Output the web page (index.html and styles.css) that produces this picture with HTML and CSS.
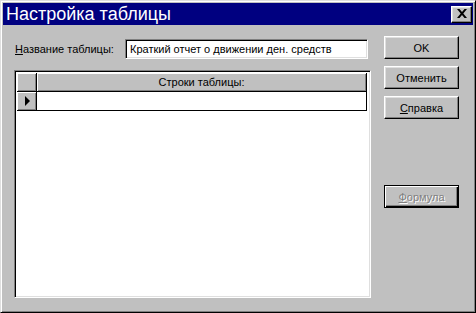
FILE: index.html
```html
<!DOCTYPE html>
<html lang="ru">
    <head>
        <meta charset="UTF-8" />
        <meta name="viewport" content="width=device-width, initial-scale=1.0" />
        <title>Настройка таблицы</title>
        <link rel="stylesheet" href="styles.css">
    </head>
    <body>
        <div class="window">
            <div class="titlebar">
                <span class="title">Настройка таблицы</span>
                <button class="close" type="button">
                    <svg width="10" height="9" viewBox="0 0 10 9">
                        <path d="M0 0h2.5L5 3 7.5 0H10L6.3 4.5 10 9H7.5L5 6 2.5 9H0l3.7-4.5z" fill="#000" />
                    </svg>
                </button>
            </div>
            <div class="content">
                <main class="main">
                    <div class="name-row">
                        <label for="tableName"><u>Н</u>азвание таблицы:</label>
                        <div class="field" id="tableName">Краткий отчет о движении ден. средств</div>
                    </div>
                    <div class="grid">
                        <div class="grid-head">
                            <div class="corner"></div>
                            <div class="col-head">Строки таблицы:</div>
                        </div>
                        <div class="grid-row">
                            <div class="row-mark">
                                <svg width="5" height="10" viewBox="0 0 5 10">
                                    <path d="M0 0l5 5-5 5z" fill="#000" />
                                </svg>
                            </div>
                            <div class="cell"></div>
                        </div>
                    </div>
                </main>
                <div class="buttons">
                    <button class="btn" type="button">OK</button>
                    <button class="btn" type="button">Отменить</button>
                    <button class="btn" type="button"><u>С</u>правка</button>
                    <button class="btn default disabled" type="button" disabled><u>Ф</u>ормула</button>
                </div>
            </div>
        </div>
    </body>
</html>
```

FILE: styles.css
```css
* {
    padding: 0;
    margin: 0;
    box-sizing: border-box;
}
body {
    font-family: "Liberation Sans", Arial, sans-serif;
    font-size: 11px;
    color: #000;
    background: #c0c0c0;
}
.window {
    width: 476px;
    height: 313px;
    background: #c0c0c0;
    border: 1px solid;
    border-color: #dfdfdf #000 #000 #dfdfdf;
    box-shadow: inset 1px 1px #fff, inset -1px -1px #808080;
    padding: 2px;
    display: flex;
    flex-direction: column;
}

/* заголовок окна */
.titlebar {
    height: 22px;
    background: #000080;
    display: flex;
    align-items: center;
    justify-content: space-between;
    padding: 0 1px 0 3px;
}
.title {
    color: #fff;
    font-size: 18px;
    line-height: 22px;
}
.close {
    width: 21px;
    height: 17px;
    background: #c0c0c0;
    border: 1px solid;
    border-color: #fff #000 #000 #fff;
    box-shadow: inset -1px -1px #808080, inset 1px 1px #dfdfdf;
    display: flex;
    align-items: center;
    justify-content: center;
    padding-bottom: 1px;
}

.content {
    flex: 1;
    display: flex;
}
.main {
    width: 357px;
    margin-left: 11px;
}
.name-row {
    display: flex;
    align-items: center;
    height: 20px;
    margin-top: 14px;
}
.name-row label {
    width: 111px;
    padding-left: 1px;
}
.field,
.grid {
    background: #fff;
    border: 1px solid;
    border-color: #808080 #fff #fff #808080;
    box-shadow: inset 1px 1px #000, inset -1px -1px #dfdfdf;
}
.field {
    width: 243px;
    height: 20px;
    line-height: 18px;
    padding-left: 4px;
    white-space: nowrap;
}

/* таблица строк */
.grid {
    margin-top: 11px;
    height: 228px;
    padding: 2px 3px 2px 2px;
}
.grid-head,
.grid-row {
    display: flex;
    height: 19px;
    border-bottom: 1px solid #000;
    border-right: 1px solid #000;
}
.corner,
.col-head,
.row-mark {
    background: #c0c0c0;
    box-shadow: inset 1px 1px #fff, inset -1px -1px #808080;
}
.corner,
.row-mark {
    width: 20px;
    border-right: 1px solid #000;
}
.col-head {
    flex: 1;
    text-align: center;
    line-height: 18px;
}
.row-mark {
    display: flex;
    align-items: center;
    justify-content: center;
    padding-left: 2px;
}
.cell {
    flex: 1;
}

/* кнопки */
.buttons {
    width: 75px;
    margin-left: 13px;
    margin-top: 11px;
    display: flex;
    flex-direction: column;
    gap: 7px;
}
.btn {
    height: 23px;
    font-family: inherit;
    font-size: 11px;
    color: #000;
    background: #c0c0c0;
    border: 1px solid;
    border-color: #fff #000 #000 #fff;
    box-shadow: inset -1px -1px #808080, inset 1px 1px #dfdfdf;
}
.btn.default {
    border: 1px solid #000;
    box-shadow: inset 1px 1px #fff, inset -1px -1px #000, inset -2px -2px #808080;
}
.btn.disabled {
    margin-top: 59px;
    color: #808080;
    text-shadow: 1px 1px #fff;
}
```
